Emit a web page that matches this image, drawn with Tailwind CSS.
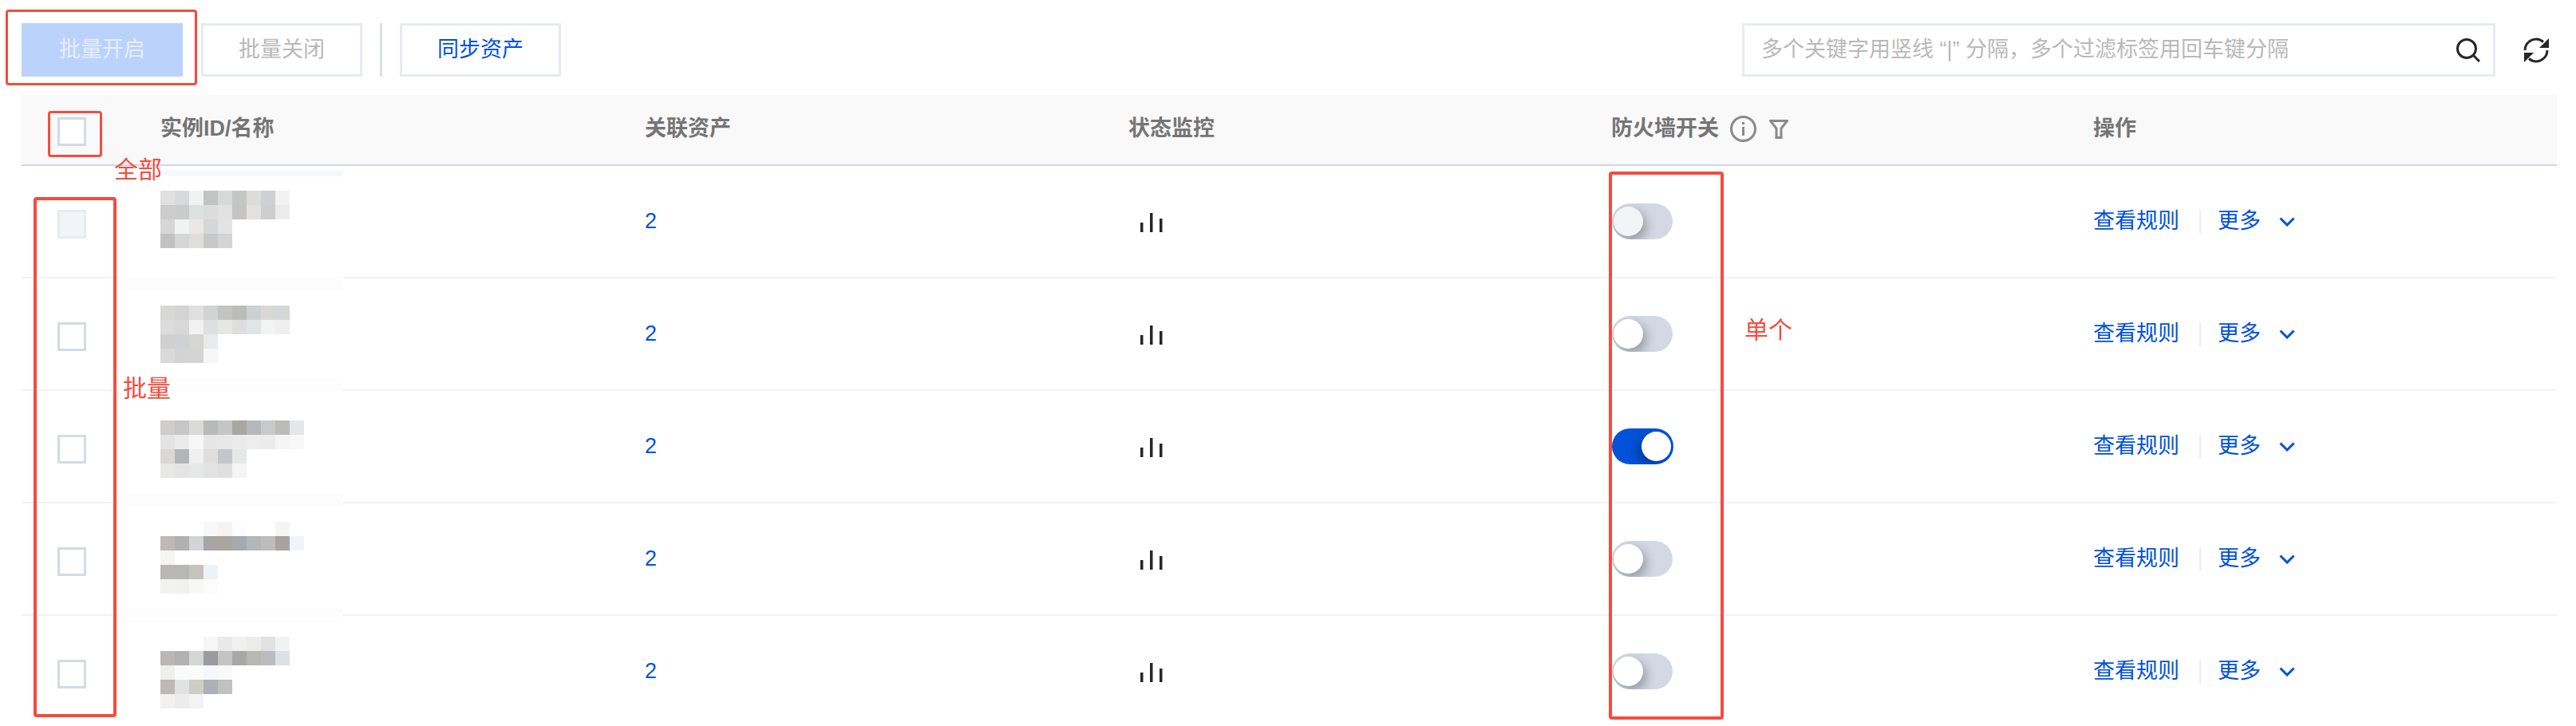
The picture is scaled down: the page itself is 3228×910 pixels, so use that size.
<!DOCTYPE html>
<html lang="zh-CN">
<head>
    <meta charset="UTF-8">
    <title>防火墙开关</title>
    <script src="https://cdn.jsdelivr.net/npm/@tailwindcss/browser@4"></script>
</head>
<body class="bg-white overflow-hidden h-[910px] font-['Liberation_Sans','Noto_Sans_CJK_SC',sans-serif] text-[27px]">
    <div class="relative h-[910px] w-[3228px] overflow-hidden">
        <!-- toolbar -->
        <div class="flex items-center h-[67px] mt-[29px] ml-[27px] w-[3177px] absolute top-0 left-0">
            <button class="w-[202px] h-[67px] bg-[#bbd3fb] text-[#e6eefd]">批量开启</button>
            <button class="w-[202px] h-[67px] ml-[23px] border-[3px] border-[#e7eaf2] text-[#b8b8b8]">批量关闭</button>
            <div class="w-[3px] h-[67px] ml-[22px] bg-[#dcdfe6]"></div>
            <button class="w-[202px] h-[67px] ml-[22px] border-[3px] border-[#e7eaf2] text-[#0052d9]">同步资产</button>
            <div class="flex items-center justify-between w-[944px] h-[67px] ml-[1480px] pl-[21px] pr-[16px] border-[3px] border-[#e7eaf2]">
                <span class="text-[#b9b9b9] whitespace-nowrap">多个关键字用竖线 “|” 分隔，多个过滤标签用回车键分隔</span>
                <svg class="w-[30px] h-[30px] shrink-0" viewBox="0 0 30 30" fill="none" stroke="#262626" stroke-width="3"><circle cx="13" cy="13" r="11.500"/><path d="M21.500 21.500 L29 29"/></svg>
            </div>
            <svg class="w-[32px] h-[32px] ml-[35px] shrink-0" viewBox="0 0 32 32" fill="none"><path d="M2 16A14 14 0 0 1 25 5.500M30 16A14 14 0 0 1 7 26.500" stroke="#262626" stroke-width="3"/><path d="M32 1V13H20zM1 19H13L1 31z" fill="#262626"/></svg>
        </div>

        <!-- table -->
        <div class="absolute top-[119px] left-[27px] w-[3177px]">
            <div class="relative grid grid-cols-[174px_607px_606px_605px_604px_581px] items-center h-[89px] bg-[#f9f9f9] border-b-2 border-[#d3d6e2] font-bold text-[#757575] pb-[2px]">
                <div class="pl-[45px] pt-[7px]"><div class="w-[36px] h-[36px] border-[3px] border-[#d5d9e5] bg-white"></div></div>
                <div>实例ID/名称</div>
                <div>关联资产</div>
                <div>状态监控</div>
                <div class="flex items-center">
                    <span>防火墙开关</span>
                    <svg class="w-[33px] h-[33px] ml-[14px]" viewBox="0 0 33 33" fill="none" stroke="#8a8a8a" stroke-width="3"><circle cx="16.500" cy="16.500" r="15"/><path d="M16.500 14V25M16.500 8v3"/></svg>
                    <svg class="w-[24px] h-[24px] ml-[16px]" viewBox="0 0 24 24" fill="none" stroke="#8a8a8a" stroke-width="3"><path d="M1.500 1.500h21l-7.500 9.500v11.500h-6v-11.500z"/></svg>
                </div>
                <div>操作</div>
            </div>
            <div class="absolute top-[94px] left-[178px] w-[225px] h-[8px] bg-[#f7f8fa]"></div>
            <div id="rows"></div>
        </div>

        <!-- annotations -->
        <div class="absolute left-[7px] top-[12px] w-[240px] h-[95px] border-[3px] border-[#f44c3e] rounded-[4px]"></div>
        <div class="absolute left-[60px] top-[139px] w-[68px] h-[58px] border-[3px] border-[#f44c3e] rounded-[4px]"></div>
        <div class="absolute left-[42px] top-[247px] w-[104px] h-[652px] border-[4px] border-[#f44c3e] rounded-[4px]"></div>
        <div class="absolute left-[2016px] top-[215px] w-[144px] h-[687px] border-[4px] border-[#f44c3e] rounded-[4px]"></div>
        <span class="absolute left-[143px] top-[190px] text-[30px] text-[#f44c3e]">全部</span>
        <span class="absolute left-[154px] top-[464px] text-[30px] text-[#f44c3e]">批量</span>
        <span class="absolute left-[2186px] top-[391px] text-[30px] text-[#f44c3e]">单个</span>
    </div>

    <script>
        // mosaic colours of the blurred instance names, '' = no cell
        const rows = [
            { top: 31, band: 139, on: false, disabled: true, blocks: [
                ['e0e0e0','d8d9da','f2f2f2','c2c3c3','d8d8d8','c4c5c5','dddcda','cfd0d2','f2f2f3'],
                ['cccccc','cacbcb','dfe0e0','dcdcdc','e2e2e2','c4c4c4','e2e1de','cdced0','ececec'],
                ['d6d6d6','f1f2f2','e9e8e6','d5d6d8','e3e3e3'],
                ['c2c2c2','d6d6d6','dfdedc','c8c8c8','d3d5d4']] },
            { top: 34, band: 125, on: false, disabled: false, blocks: [
                ['d8d8d6','d4d4d4','e0e0e0','d2d4d3','c4c4c4','bcbcba','ced1d3','dad8d5','d6d7d9'],
                ['dcdcdc','d8d8d8','f2f2f2','dde0df','e6e6e4','dedede','e3e4e5','f3f3f3','efefef'],
                ['d0d0d0','d0d1d3','d5d5d3','e9eaeb'],
                ['d9d9d9','d3d3d3','d4d4d4','f6f6f6']] },
            { top: 37, band: 128, on: true, disabled: false, blocks: [
                ['cfcecc','c6c6c6','dadad8','b9b9b9','c4c5c6','a8a7a4','b4b8bb','c9c9c9','bbbbb9','e5e6e8'],
                ['e4e4e4','ebebeb','f7f7f7','e6e6e6','e8e8e8','ebebeb','ecedec','ebebeb','f5f5f5','f8f8f8'],
                ['dad8d3','b3b6b8','f0f0f0','dfdedc','c5c6c8','e7e8e8'],
                ['e8e8e6','e4e4e4','e6e8e7','e3e3e3','dfdfdf','f5f5f5']] },
            { top: 23, band: 132, on: false, disabled: false, blocks: [
                ['','','','f8f8f8','f4f4f2','fcfdfc','','','f5f5f5'],
                ['bbbab8','b1b1b1','d3d4d6','a6a6a6','a9a5a0','a8abae','b5b6b6','bdbdbd','a7a3a0','f0f4f7'],
                ['f5f5f5'],
                ['b9b8b6','b7b7b7','c6c3bf','eef1f6'],
                ['f2f2f1','f1f1f0','f7f7f5','fcfcfc']] },
            { top: 26, band: 200, on: false, disabled: false, blocks: [
                ['','','','f6f6f6','e9e9e9','f0f0f0','ececec','e2e2e2','f1f3f3'],
                ['b9b8b6','b1b1b1','d4d6d5','9b9b9d','c4c4c4','a8a8a6','b9b7b2','babcbf','dfe0e2'],
                ['eeeeee','fbfbfb','fbfbf9','f6f7f8','f8f8f8'],
                ['bbbab8','e1e2e4','cfcdc8','adb0b4','c0c1c0'],
                ['f1f1f1','ececec','f3f3f3']] }
        ];

        const bars = '<svg class="w-[30px] h-[24px] ml-[15px] mt-[3px]" viewBox="0 0 30 24" fill="#262626"><rect x="0" y="12" width="3.500" height="12"/><rect x="12" y="0" width="3.500" height="24"/><rect x="24" y="7" width="3.500" height="17"/></svg>';
        const chevron = '<svg class="w-[20px] h-[12px] ml-[23px]" viewBox="0 0 20 12" fill="none" stroke="#0052d9" stroke-width="3"><path d="M1.500 1.500 L10 10 L18.500 1.500"/></svg>';

        function mosaic(blocks) {
            return blocks.map(line => '<div class="flex h-[18px]">' + line.map(c =>
                '<div class="w-[18px] h-[18px]" style="background-color:' + (c ? '#' + c : 'transparent') + '"></div>').join('') + '</div>').join('');
        }

        function toggle(row) {
            if (row.on) {
                return '<div class="relative w-[77px] h-[45px] ml-[1px] rounded-full bg-[#0052d9] overflow-hidden"><div class="absolute left-[37px] top-[4px] w-[37px] h-[37px] rounded-full bg-white shadow-[-6px_6px_14px_rgba(0,0,0,0.25)]"></div></div>';
            }
            const knob = row.disabled ? 'bg-[#f3f4f8]' : 'bg-white';
            return '<div class="relative w-[76px] h-[45px] ml-[1px] rounded-full bg-[#d3d8e2] overflow-hidden"><div class="absolute left-[2px] top-[4px] w-[37px] h-[37px] rounded-full shadow-[4px_6px_14px_rgba(0,0,0,0.3)] ' + knob + '"></div></div>';
        }

        document.getElementById('rows').innerHTML = rows.map(row => {
            const box = row.disabled ? 'border-[#e8eaf2] bg-[#f3f4f8]' : 'border-[#d5d9e5] bg-white';
            return '<div class="relative grid grid-cols-[174px_607px_606px_605px_604px_581px] items-center h-[141px] border-b-2 border-[#f3f3f7] text-[#0052d9]">' +
                '<div class="pl-[45px] pt-[7px]"><div class="w-[36px] h-[36px] border-[3px] ' + box + '"></div></div>' +
                '<div class="self-start" style="margin-top:' + row.top + 'px">' + mosaic(row.blocks) + '</div>' +
                '<div>2</div>' +
                '<div>' + bars + '</div>' +
                '<div>' + toggle(row) + '</div>' +
                '<div class="flex items-center"><span>查看规则</span><div class="w-[2px] h-[30px] ml-[25px] mr-[21px] bg-[#ececf0]"></div><span>更多</span>' + chevron + '</div>' +
                '<div class="absolute left-[121px] w-[282px] h-[17px] bg-[#fdfdfd]" style="top:' + row.band + 'px"></div>' +
                '</div>';
        }).join('');
    </script>
</body>
</html>
